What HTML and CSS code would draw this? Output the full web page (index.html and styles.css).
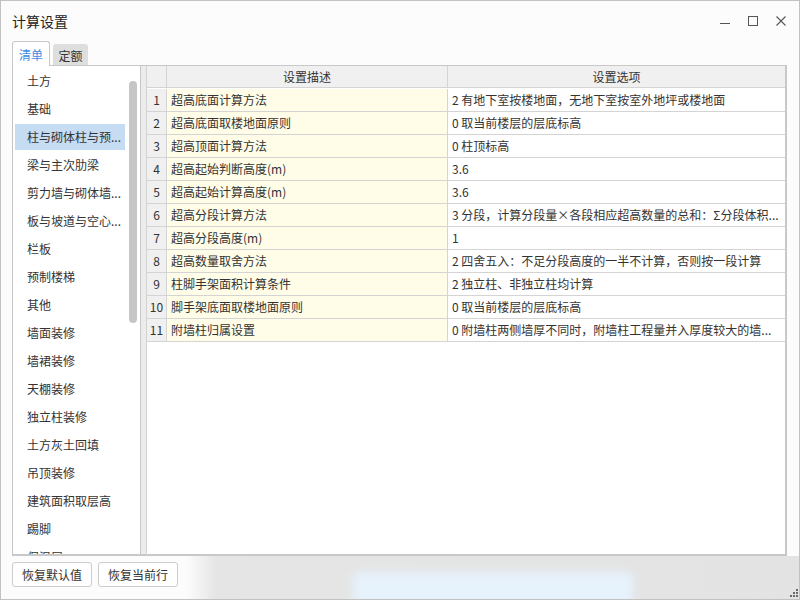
FILE: index.html
```html
<!DOCTYPE html>
<html lang="zh-CN">
<head>
<meta charset="utf-8">
<title>计算设置</title>
<link rel="stylesheet" href="styles.css">
</head>
<body>
<div class="window">
  <div class="titlebar">
    <span class="title">计算设置</span>
    <div class="controls">
      <svg class="ctl" width="10" height="10" viewBox="0 0 10 10"><line x1="0" y1="7.5" x2="10" y2="7.5" stroke="#555" stroke-width="1"/></svg>
      <svg class="ctl" width="10" height="10" viewBox="0 0 10 10"><rect x="0.5" y="0.5" width="9" height="9" fill="none" stroke="#555" stroke-width="1"/></svg>
      <svg class="ctl" width="10" height="10" viewBox="0 0 10 10"><path d="M0.5 0.5 L9.5 9.5 M9.5 0.5 L0.5 9.5" stroke="#555" stroke-width="1.1"/></svg>
    </div>
  </div>
  <div class="tabs">
    <div class="tab active">清单</div>
    <div class="tab">定额</div>
  </div>
  <div class="content">
    <div class="leftpanel">
      <ul class="list">
        <li>土方</li>
        <li>基础</li>
        <li class="selected">柱与砌体柱与预...</li>
        <li>梁与主次肋梁</li>
        <li>剪力墙与砌体墙...</li>
        <li>板与坡道与空心...</li>
        <li>栏板</li>
        <li>预制楼梯</li>
        <li>其他</li>
        <li>墙面装修</li>
        <li>墙裙装修</li>
        <li>天棚装修</li>
        <li>独立柱装修</li>
        <li>土方灰土回填</li>
        <li>吊顶装修</li>
        <li>建筑面积取层高</li>
        <li>踢脚</li>
        <li>保温层</li>
      </ul>
      <div class="track"><div class="thumb"></div></div>
    </div>
    <div class="splitter"></div>
    <div class="rightpanel">
      <div class="grid">
        <div class="cell hd num"></div>
        <div class="cell hd center">设置描述</div>
        <div class="cell hd center last">设置选项</div>

        <div class="cell num">1</div><div class="cell desc">超高底面计算方法</div><div class="cell opt last">2 有地下室按楼地面，无地下室按室外地坪或楼地面</div>
        <div class="cell num">2</div><div class="cell desc">超高底面取楼地面原则</div><div class="cell opt last">0 取当前楼层的层底标高</div>
        <div class="cell num">3</div><div class="cell desc">超高顶面计算方法</div><div class="cell opt last">0 柱顶标高</div>
        <div class="cell num">4</div><div class="cell desc">超高起始判断高度(m)</div><div class="cell opt last">3.6</div>
        <div class="cell num">5</div><div class="cell desc">超高起始计算高度(m)</div><div class="cell opt last">3.6</div>
        <div class="cell num">6</div><div class="cell desc">超高分段计算方法</div><div class="cell opt last">3 分段，计算分段量×各段相应超高数量的总和：Σ分段体积...</div>
        <div class="cell num">7</div><div class="cell desc">超高分段高度(m)</div><div class="cell opt last">1</div>
        <div class="cell num">8</div><div class="cell desc">超高数量取舍方法</div><div class="cell opt last">2 四舍五入：不足分段高度的一半不计算，否则按一段计算</div>
        <div class="cell num">9</div><div class="cell desc">柱脚手架面积计算条件</div><div class="cell opt last">2 独立柱、非独立柱均计算</div>
        <div class="cell num">10</div><div class="cell desc">脚手架底面取楼地面原则</div><div class="cell opt last">0 取当前楼层的层底标高</div>
        <div class="cell num">11</div><div class="cell desc">附墙柱归属设置</div><div class="cell opt last">0 附墙柱两侧墙厚不同时，附墙柱工程量并入厚度较大的墙...</div>
      </div>
    </div>
  </div>
  <div class="footer">
    <button class="btn">恢复默认值</button>
    <button class="btn">恢复当前行</button>
    <div class="blob"></div>
    <svg class="grip" width="9" height="9" viewBox="0 0 9 9">
      <rect x="7" y="1" width="2" height="2" fill="#6a6a6a"/>
      <rect x="4" y="4" width="2" height="2" fill="#6a6a6a"/>
      <rect x="7" y="4" width="2" height="2" fill="#6a6a6a"/>
      <rect x="1" y="7" width="2" height="2" fill="#6a6a6a"/>
      <rect x="4" y="7" width="2" height="2" fill="#6a6a6a"/>
      <rect x="7" y="7" width="2" height="2" fill="#6a6a6a"/>
    </svg>
  </div>
</div>
</body>
</html>
```

FILE: styles.css
```css
* { box-sizing: border-box; }

html, body {
  margin: 0;
  padding: 0;
  width: 800px;
  height: 600px;
  overflow: hidden;
  background: #ffffff;
}

body {
  font-family: "Noto Sans CJK SC", "Noto Sans", sans-serif;
  font-size: 12px;
  color: #333333;
}

.window {
  width: 800px;
  height: 600px;
  border: 1px solid #c2c2c2;
  background: #fcfcfc;
  display: flex;
  flex-direction: column;
}

.titlebar {
  height: 39px;
  flex: none;
  display: flex;
  align-items: center;
  padding-left: 11px;
  padding-right: 13px;
}

.title {
  font-size: 14px;
  color: #222222;
  line-height: 1;
}

.controls {
  margin-left: auto;
  display: flex;
  gap: 18px;
}

.ctl { display: block; }

.tabs {
  height: 25px;
  flex: none;
  display: flex;
  align-items: flex-end;
  padding-left: 11px;
  gap: 3px;
}

.tab {
  height: 21px;
  width: 35px;
  background: #dedede;
  border-radius: 3px 3px 0 0;
  display: flex;
  align-items: center;
  justify-content: center;
  font-size: 12px;
  color: #333333;
  padding-top: 1px;
}

.tab.active {
  height: 25px;
  width: 38px;
  background: #ffffff;
  border: 1px solid #c8c8c8;
  border-bottom: none;
  color: #3d8ce6;
  margin-bottom: -1px;
  position: relative;
  z-index: 1;
  padding-top: 0;
}

.content {
  height: 491px;
  flex: none;
  margin: 0 12px 0 11px;
  display: flex;
  border-top: 1px solid #c8c8c8;
}

.leftpanel {
  width: 128px;
  flex: none;
  background: #ffffff;
  border-left: 1px solid #c4c4c4;
  border-bottom: 2px solid #c8c8c8;
  display: flex;
  overflow: hidden;
}

.list {
  list-style: none;
  margin: 0;
  padding: 2px 4px 0 2px;
  flex: 1;
  min-width: 0;
}

.list li {
  height: 26px;
  margin-bottom: 2px;
  padding-left: 12px;
  line-height: 26px;
  white-space: nowrap;
  overflow: hidden;
  color: #333333;
}

.list li.selected {
  background: #c6dcf2;
}

.track {
  width: 8px;
  flex: none;
  margin-right: 3px;
}

.thumb {
  margin-top: 15px;
  height: 242px;
  border-radius: 4px;
  background: #c6c6c6;
}

.splitter {
  width: 6px;
  flex: none;
  background: #ececec;
  border-left: 1px solid #c8c8c8;
  border-bottom: 2px solid #c8c8c8;
}

.rightpanel {
  flex: 1;
  background: #ffffff;
  border-left: 1px solid #d2d2d2;
  border-right: 2px solid #c8c8c8;
  border-bottom: 2px solid #c8c8c8;
}

.grid {
  display: grid;
  grid-template-columns: 20px 281px 1fr;
  grid-auto-rows: 23px;
}

.cell {
  border-right: 1px solid #d4d4d4;
  border-bottom: 1px solid #d4d4d4;
  white-space: nowrap;
  overflow: hidden;
  line-height: 22px;
  padding-left: 4px;
  color: #333333;
}

.cell.last { border-right: none; }

.cell.hd {
  height: 22px;
  line-height: 21px;
  background: #f0f0f0;
}

.grid > .cell.hd { margin-bottom: -1px; }

.cell.center {
  text-align: center;
  padding-left: 0;
}

.cell.num {
  background: #f0f0f0;
  text-align: center;
  padding-left: 0;
  font-size: 12px;
}

.cell.desc { background: #fffde8; }

.cell.opt { background: #ffffff; }

.footer {
  flex: 1;
  display: flex;
  align-items: flex-start;
  padding: 6px 1px 0 11px;
  gap: 6px;
  overflow: hidden;
  background: linear-gradient(to right, #fcfcfc 0, #fcfcfc 185px, #e5e5e5 215px, #e3e3e3 100%);
}

.btn {
  width: 80px;
  height: 25px;
  flex: none;
  background: #ffffff;
  border: 1px solid #cccccc;
  border-radius: 3px;
  font-family: "Noto Sans CJK SC", "Noto Sans", sans-serif;
  font-size: 12px;
  color: #333333;
  padding: 0;
  line-height: 23px;
}

.blob {
  width: 280px;
  height: 34px;
  flex: none;
  margin-left: 169px;
  margin-top: 10px;
  background: #e6f2fc;
  filter: blur(5px);
}

.grip {
  margin-left: auto;
  align-self: flex-end;
  margin-bottom: 2px;
  display: block;
}
```
